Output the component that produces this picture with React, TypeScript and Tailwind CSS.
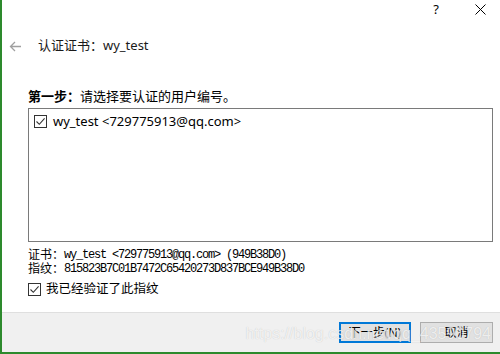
import React from "react";

const cjk = "font-['Segoe_UI','Noto_Sans','Noto_Sans_CJK_SC',sans-serif]";
const mono = "font-['Liberation_Mono','Noto_Sans_CJK_SC',monospace]";

function CheckBox() {
  return (
    <span className="flex h-[13px] w-[13px] shrink-0 items-center justify-center border border-[#333] bg-white">
      <svg width="11" height="11" viewBox="0 0 11 11" fill="none">
        <path d="M1.5 5.5 L4.3 8.3 L9.6 2.4" stroke="#333" strokeWidth="1.1" />
      </svg>
    </span>
  );
}

export default function App() {
  return (
    <div className={`relative flex h-[354px] w-[500px] flex-col overflow-hidden border-b-2 border-l-2 border-[#2d8a2d] bg-white text-[#000] ${cjk}`}>
      {/* caption buttons */}
      <div className="flex h-[18px] items-center justify-end pr-[14px] text-[13px]">
        <span className="mr-[36px] leading-none">?</span>
        <svg width="11" height="11" viewBox="0 0 11 11">
          <path d="M0.5 0.5 L10.5 10.5 M10.5 0.5 L0.5 10.5" stroke="#000" strokeWidth="1" />
        </svg>
      </div>

      {/* title */}
      <div className="mt-[19px] flex h-[18px] items-center pl-[7px]">
        <svg width="13" height="11" viewBox="0 0 13 11" fill="none">
          <path d="M12 5.5 H1.5 M6 1 L1.5 5.5 L6 10" stroke="#a0a0a0" strokeWidth="1.3" />
        </svg>
        <span className="ml-[16px] text-[13px] text-[#1a1a1a]">认证证书：wy_test</span>
      </div>

      {/* body */}
      <div className="flex flex-1 flex-col pl-[26px] pr-[7px]">
        <div className="mt-[32px] h-[18px] text-[13px] leading-[18px]">
          <span className="font-bold">第一步：</span>请选择要认证的用户编号。
        </div>

        <div className="mt-[3px] h-[134px] border border-[#7a7a7a] bg-white px-[5px] pt-[4px]">
          <div className="flex items-center gap-[6px] text-[13px] leading-[16px]">
            <CheckBox />
            <span>wy_test &lt;729775913@qq.com&gt;</span>
          </div>
        </div>

        <div className="mt-[6px] text-[12px] leading-[14px]">
          <div className="flex items-center">
            <span className="w-[36px] shrink-0">证书：</span>
            <span className={`${mono} text-[12px] tracking-[-1.2px]`}>wy_test &lt;729775913@qq.com&gt; (949B38D0)</span>
          </div>
          <div className="flex items-center">
            <span className="w-[36px] shrink-0">指纹：</span>
            <span className={`${mono} text-[12px] tracking-[-1.2px]`}>815823B7C01B7472C65420273D837BCE949B38D0</span>
          </div>
        </div>

        <div className="mt-[5px] flex items-center gap-[5px] text-[12.5px] leading-[16px]">
          <CheckBox />
          <span>我已经验证了此指纹</span>
        </div>
      </div>

      {/* footer */}
      <div className="flex h-[40px] items-center justify-end gap-[9px] border-t border-[#dfdfdf] bg-[#f0f0f0] pr-[7px]">
        <button className="h-[21px] w-[72px] border-2 border-[#0078d7] bg-[#e1e1e1] text-[12px] leading-none">
          下一步(N)
        </button>
        <button className="h-[21px] w-[73px] border border-[#adadad] bg-[#e1e1e1] text-[12px] leading-none">
          取消
        </button>
      </div>

      {/* watermark */}
      <span className="pointer-events-none absolute bottom-[10px] right-[9px] font-['Liberation_Sans',sans-serif] text-[16px] leading-none text-white/75 [text-shadow:0_0_1px_rgba(0,0,0,0.2)]">
        https://blog.csdn.net/qq_43590794
      </span>
    </div>
  );
}
